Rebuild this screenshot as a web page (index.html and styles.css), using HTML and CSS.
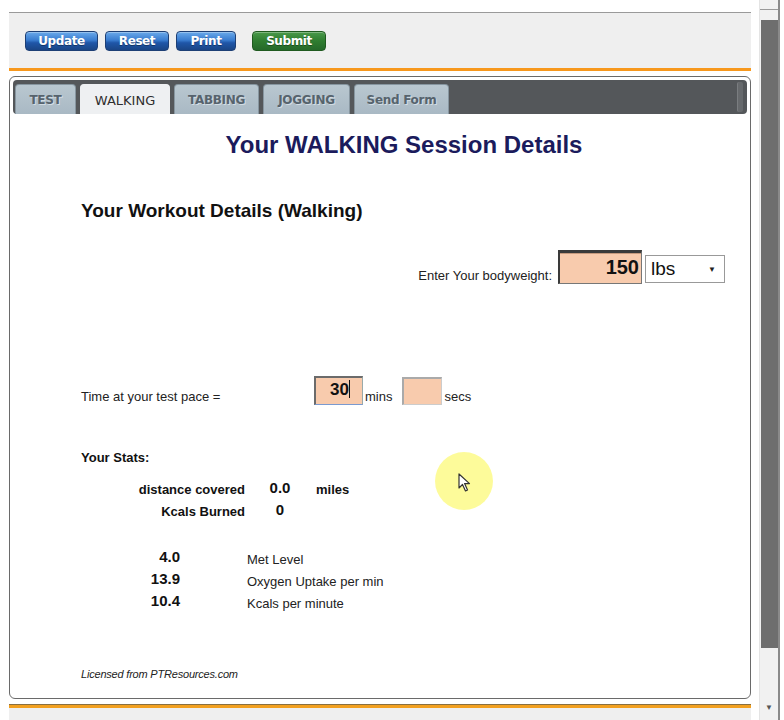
FILE: index.html
```html
<!DOCTYPE html>
<html>
<head>
<meta charset="utf-8">
<link rel="stylesheet" href="styles.css">
</head>
<body>
<div class="window">
  <div class="page">
    <div class="top-gap"></div>
    <div class="toolbar">
      <button class="btn btn-update">Update</button>
      <button class="btn btn-reset">Reset</button>
      <button class="btn btn-print">Print</button>
      <button class="btn btn-submit">Submit</button>
    </div>
    <div class="orange"></div>
    <div class="panel">
      <div class="tabbar">
        <div class="tab tab-test">TEST</div>
        <div class="tab tab-walking active">WALKING</div>
        <div class="tab tab-tabbing">TABBING</div>
        <div class="tab tab-jogging">JOGGING</div>
        <div class="tab tab-send">Send Form</div>
        <div class="tab-scroll"></div>
      </div>
      <div class="content">
        <h1 class="title">Your WALKING Session Details</h1>
        <h2 class="subtitle">Your Workout Details (Walking)</h2>
        <div class="weight-row">
          <span class="weight-label">Enter Your bodyweight:</span>
          <div class="weight-input">150</div>
          <div class="unit-select"><span>lbs</span><span class="select-arrow">&#9660;</span></div>
        </div>
        <div class="pace-row">
          <span class="pace-label">Time at your test pace =</span>
          <div class="pace-input mins-input">30<span class="caret"></span></div>
          <span class="unit unit-mins">mins</span>
          <div class="pace-input secs-input"></div>
          <span class="unit">secs</span>
        </div>
        <div class="stats-title">Your Stats:</div>
        <div class="stats1">
          <div class="s1-label">distance covered</div>
          <div class="s1-value">0.0</div>
          <div class="s1-unit">miles</div>
          <div class="s1-label">Kcals Burned</div>
          <div class="s1-value">0</div>
          <div class="s1-unit"></div>
        </div>
        <div class="stats2">
          <div class="s2-value">4.0</div>
          <div class="s2-label">Met Level</div>
          <div class="s2-value">13.9</div>
          <div class="s2-label">Oxygen Uptake per min</div>
          <div class="s2-value">10.4</div>
          <div class="s2-label">Kcals per minute</div>
        </div>
        <div class="license">Licensed from PTResources.com</div>
      </div>
    </div>
    <div class="orange-bottom"></div>
    <div class="bottom-gray"></div>
  </div>
  <div class="scrollbar">
    <div class="scroll-top"></div>
    <div class="thumb"></div>
    <div class="scroll-arrow">&#9660;</div>
  </div>
  <div class="highlight">
    <svg class="cursor" width="14" height="20" viewBox="0 0 14 20">
      <path d="M1 1 L1 15 L4.5 11.5 L7.5 18 L9.5 17 L6.6 10.6 L11.5 10.6 Z" fill="#ffffff" stroke="#333333" stroke-width="1.2" stroke-linejoin="round"/>
    </svg>
  </div>
</div>
</body>
</html>
```
FILE: styles.css
```css
html, body {
  margin: 0;
  padding: 0;
  background: #ffffff;
  overflow: hidden;
}
body {
  font-family: "Liberation Sans", Arial, sans-serif;
  color: #111;
}
.window {
  position: relative;
  display: flex;
  height: 720px;
  width: 784px;
}
.page {
  width: 742px;
  margin-left: 9px;
  display: flex;
  flex-direction: column;
}
.top-gap {
  height: 12px;
}
.toolbar {
  height: 56px;
  box-sizing: border-box;
  border-top: 1px solid #9a9a9a;
  background: #efefef;
  padding: 18px 0 0 16px;
  display: flex;
  gap: 7px;
  align-items: flex-start;
}
.btn {
  height: 20px;
  box-sizing: border-box;
  border-radius: 4px;
  border: 1px solid #1d3f75;
  color: #fff;
  font-family: "DejaVu Sans", Tahoma, sans-serif;
  font-weight: bold;
  font-size: 12px;
  letter-spacing: -0.4px;
  line-height: 17px;
  padding: 0;
  text-shadow: 0 1px 0 rgba(0,0,0,0.35);
  background: linear-gradient(#6aa9ea 0%, #3a7dd0 45%, #1f56a8 60%, #1a4585 100%);
  box-shadow: inset 0 1px 0 rgba(255,255,255,0.3);
}
.btn-update { width: 73px; }
.btn-reset { width: 64px; }
.btn-print { width: 60px; }
.btn-submit {
  width: 74px;
  margin-left: 9px;
  border-color: #1f5a1f;
  background: linear-gradient(#4a9a4a 0%, #2f7d30 50%, #25692a 100%);
}
.orange {
  height: 3px;
  background: #f7981d;
}
.panel {
  margin-top: 5px;
  height: 623px;
  box-sizing: border-box;
  border: 1px solid #6a6a6a;
  border-radius: 6px;
  padding: 3px;
  display: flex;
  flex-direction: column;
}
.tabbar {
  position: relative;
  height: 34px;
  box-sizing: border-box;
  background: #54575a;
  border-radius: 4px;
  padding-left: 2px;
  display: flex;
  align-items: flex-end;
  gap: 4px;
}
.tab {
  height: 30px;
  box-sizing: border-box;
  border-radius: 4px 4px 0 0;
  border: 1px solid #8796a0;
  border-bottom: none;
  background: linear-gradient(#b9c7d0, #a9b9c4);
  color: #56636d;
  text-shadow: 1px 1px 0 #d3dde4;
  font-family: "DejaVu Sans", Verdana, sans-serif;
  font-weight: bold;
  font-size: 12px;
  letter-spacing: -0.3px;
  display: flex;
  align-items: center;
  justify-content: center;
  padding-top: 1px;
}
.tab-test { width: 61px; }
.tab-walking { width: 90px; }
.tab-tabbing { width: 85px; }
.tab-jogging { width: 87px; }
.tab-send { width: 95px; }
.tab.active {
  background: #eef0f2;
  border-color: #eef0f2;
  color: #2e2e2e;
  text-shadow: none;
  font-weight: normal;
  font-size: 13px;
  letter-spacing: 0;
}
.tab-scroll {
  position: absolute;
  right: 4px;
  top: 2px;
  width: 5px;
  height: 30px;
  background: #66696c;
  border-left: 1px solid #7a7d80;
  border-radius: 2px;
}
.content {
  flex: 1;
  padding: 0 20px 14px 68px;
  display: flex;
  flex-direction: column;
}
.title {
  margin: 17px 0 0 0;
  font-size: 24px;
  line-height: 28px;
  font-weight: bold;
  color: #1b1b5c;
  text-align: center;
}
.subtitle {
  margin: 41px 0 0 0;
  font-size: 19px;
  line-height: 22px;
  font-weight: bold;
  color: #111;
}
.weight-row {
  margin-top: 28px;
  margin-right: 2px;
  display: flex;
  justify-content: flex-end;
  align-items: flex-end;
}
.weight-label {
  font-size: 13px;
  line-height: 15px;
  padding-bottom: 1px;
  margin-right: 6px;
  color: #222;
}
.weight-input {
  width: 84px;
  height: 34px;
  box-sizing: border-box;
  background: #f8cbad;
  border-top: 3px solid #3a3a3a;
  border-left: 2px solid #3a3a3a;
  border-right: 1px solid #777;
  border-bottom: 1px solid #777;
  box-shadow: inset 0 1px 0 #c69a7e;
  font-size: 20px;
  font-weight: bold;
  line-height: 28px;
  text-align: right;
  padding-right: 2px;
  color: #111;
}
.unit-select {
  margin-left: 3px;
  margin-bottom: 1px;
  width: 80px;
  height: 28px;
  box-sizing: border-box;
  border: 1px solid #999;
  background: #fff;
  display: flex;
  align-items: center;
  justify-content: space-between;
  padding: 0 8px 0 5px;
  font-size: 19px;
  color: #111;
}
.select-arrow {
  font-size: 8px;
  color: #222;
}
.pace-row {
  margin-top: 92px;
  display: flex;
  align-items: flex-end;
}
.pace-label {
  width: 233px;
  font-size: 13px;
  line-height: 15px;
  padding-bottom: 1px;
  color: #222;
}
.pace-input {
  box-sizing: border-box;
  background: #f8cbad;
}
.mins-input {
  width: 49px;
  height: 29px;
  border-top: 2px solid #6b6b6b;
  border-left: 2px solid #6b6b6b;
  border-right: 1px solid #9aa;
  border-bottom: 1px solid #7a9ad0;
  font-size: 17px;
  font-weight: bold;
  line-height: 24px;
  text-align: right;
  padding-right: 12px;
  color: #111;
}
.caret {
  display: inline-block;
  width: 1px;
  height: 18px;
  background: #111;
  vertical-align: -3px;
}
.secs-input {
  width: 40px;
  height: 28px;
  border-top: 2px solid #aaa;
  border-left: 2px solid #aaa;
  border-right: 1px solid #ccc;
  border-bottom: 1px solid #ccc;
}
.unit {
  font-size: 13px;
  line-height: 15px;
  padding-bottom: 1px;
  margin-left: 2px;
  color: #222;
}
.unit-mins {
  margin-right: 10px;
}
.stats-title {
  margin-top: 45px;
  font-size: 13px;
  line-height: 15px;
  font-weight: bold;
  color: #111;
}
.stats1 {
  margin-top: 13px;
  display: grid;
  grid-template-columns: 164px 70px auto;
  grid-auto-rows: 22px;
  align-items: center;
}
.s1-label {
  text-align: right;
  font-size: 13px;
  font-weight: bold;
  color: #111;
}
.s1-value {
  text-align: center;
  font-size: 15px;
  font-weight: bold;
  color: #111;
  margin-top: -4px;
}
.s1-unit {
  font-size: 13px;
  font-weight: bold;
  padding-left: 1px;
  color: #111;
}
.stats2 {
  margin-top: 24px;
  display: grid;
  grid-template-columns: 99px auto;
  column-gap: 67px;
  grid-auto-rows: 22px;
}
.s2-value {
  text-align: right;
  font-size: 15px;
  font-weight: bold;
  line-height: 22px;
  color: #111;
}
.s2-label {
  font-size: 13px;
  line-height: 16px;
  padding-top: 6px;
  color: #222;
}
.license {
  margin-top: auto;
  font-size: 11px;
  font-style: italic;
  line-height: 14px;
  color: #222;
  letter-spacing: -0.2px;
}
.orange-bottom {
  margin-top: 5px;
  height: 3px;
  border-top: 1px solid #8a7040;
  background: #f2a020;
}
.bottom-gray {
  flex: 1;
  background: #efefef;
}
.scrollbar {
  margin-left: 8px;
  width: 21px;
  height: 720px;
  box-sizing: border-box;
  background: #f1f1f1;
  border-right: 2px solid #8a8a8a;
  border-left: 1px solid #e4e4e4;
  display: flex;
  flex-direction: column;
  align-items: center;
}
.scroll-top {
  width: 100%;
  box-sizing: border-box;
  border-top: 1px solid #999;
  margin-top: 9px;
  height: 11px;
}
.thumb {
  width: 17px;
  height: 628px;
  background: #6e6e6e;
}
.scroll-arrow {
  margin-top: 55px;
  font-size: 8px;
  color: #555;
}
.highlight {
  position: absolute;
  left: 435px;
  top: 452px;
  width: 58px;
  height: 58px;
  border-radius: 50%;
  background: radial-gradient(circle, #fdfb9a 0%, #fdfb9a 80%, rgba(253,251,154,0.5) 92%, rgba(253,251,154,0) 100%);
}
.cursor {
  position: absolute;
  left: 23px;
  top: 21px;
}
```
